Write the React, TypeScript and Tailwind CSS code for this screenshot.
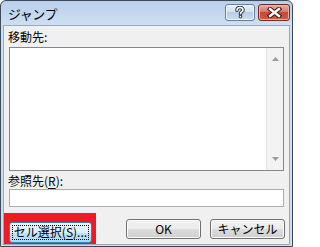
import React from "react";

const FONT = "font-['Meiryo_UI','Noto_Sans_CJK_JP',sans-serif]";

function HelpIcon() {
  return (
    <svg width="12" height="13" viewBox="0 0 12 13">
      <path d="M3 4.2C3 2.4 4.3 1.5 6 1.5S9 2.4 9 3.9C9 5.6 6.5 5.8 6.5 7.8" fill="none" stroke="#2b3645" strokeWidth="3.6" strokeLinecap="round" />
      <circle cx="6.5" cy="10.6" r="1.8" fill="#2b3645" />
      <path d="M3 4.2C3 2.4 4.3 1.5 6 1.5S9 2.4 9 3.9C9 5.6 6.5 5.8 6.5 7.8" fill="none" stroke="#ffffff" strokeWidth="1.6" strokeLinecap="round" />
      <circle cx="6.5" cy="10.6" r="0.9" fill="#ffffff" />
    </svg>
  );
}

function CloseIcon() {
  return (
    <svg width="15" height="11" viewBox="0 0 15 11">
      <path d="M3 2L12 9M12 2L3 9" stroke="#3b1410" strokeWidth="4.4" strokeLinecap="square" />
      <path d="M3 2L12 9M12 2L3 9" stroke="#ffffff" strokeWidth="2.4" strokeLinecap="square" />
    </svg>
  );
}

function Arrow({ down }: { down?: boolean }) {
  return (
    <svg width="7" height="4" viewBox="0 0 7 4">
      <path d={down ? "M0 0H7L3.5 4Z" : "M0 4H7L3.5 0Z"} fill="#9a9a9a" />
    </svg>
  );
}

function Button({ children, className = "" }: { children: React.ReactNode; className?: string }) {
  return (
    <button
      type="button"
      className={`h-[20px] w-[75px] rounded-[3px] border border-[#707070] bg-[linear-gradient(#f2f2f2_0%,#ebebeb_50%,#dddddd_51%,#cfcfcf_100%)] text-[12px] leading-none text-black flex items-center justify-center shadow-[inset_0_0_0_1px_#fcfcfc] ${className}`}
    >
      {children}
    </button>
  );
}

export default function App() {
  return (
    <div className={`w-[293px] h-[247px] overflow-hidden ${FONT}`}>
      <div className="w-full h-full flex flex-col rounded-t-[6px] border border-[#3d4a5a] bg-[linear-gradient(#b9d0ea,#cfdff2_25px,#cddcee_100%)]">
        {/* Title bar */}
        <div className="h-[24px] flex items-start justify-between shrink-0">
          <span className="ml-[7px] mt-[5px] text-[13px] leading-[16px] text-black tracking-[-0.5px]">ジャンプ</span>
          <div className="flex mt-[3px] mr-[2px] gap-[3px]">
            <div className="w-[30px] h-[17px] rounded-[3px] border border-[#6a7d97] bg-[linear-gradient(#e8f0f9_0%,#d3e1f1_45%,#b9cde6_50%,#cbdcef_100%)] shadow-[inset_0_0_0_1px_#f1f6fb] flex items-center justify-center">
              <HelpIcon />
            </div>
            <div className="w-[32px] h-[17px] rounded-[3px] border border-[#6b2b23] bg-[linear-gradient(#e8ada3_0%,#d9786b_45%,#c7463a_50%,#d05a48_100%)] shadow-[inset_0_0_0_1px_#eab6ac] flex items-center justify-center">
              <CloseIcon />
            </div>
          </div>
        </div>

        {/* Client area */}
        <div className="flex-1 mx-[2px] mb-[3px] border border-[#98a9bf] bg-[#f0f0f0] flex flex-col">
          <div className="pl-[4px] pt-[3px] text-[12px] leading-[16px] text-black">移動先:</div>
          <div className="mx-[5px] mt-[2px] h-[124px] border border-[#828790] bg-white flex justify-end">
            <div className="w-[17px] h-full bg-[#f3f3f3] border-l border-[#e6e6e6] flex flex-col items-center justify-between py-[9px]">
              <Arrow />
              <Arrow down />
            </div>
          </div>
          <div className="pl-[4px] pt-[2px] text-[12px] leading-[16px] text-black">
            参照先(<span className="underline underline-offset-2">R</span>):
          </div>
          <div className="mx-[5px] h-[18px] border border-[#abadb3] bg-white" />

          <div className="mt-[6px] flex items-start pr-[4px]">
            <div className="w-[92px] h-[31px] bg-[#ed1c24] pl-[5px] pt-[5px]">
              <button
                type="button"
                className="w-[83px] h-[21px] rounded-[3px] border border-[#3c7fb1] bg-[linear-gradient(#eaf6fd_0%,#d9f0fc_50%,#bee6fd_51%,#a7d9f5_100%)] p-[2px]"
              >
                <span className="w-full h-full flex items-center justify-center border border-dotted border-black text-[12px] leading-none text-black">
                  セル選択(<span className="underline underline-offset-2">S</span>)...
                </span>
              </button>
            </div>
            <Button className="ml-auto mt-[6px]">OK</Button>
            <Button className="ml-[9px] mt-[6px]">キャンセル</Button>
          </div>
        </div>
      </div>
    </div>
  );
}
